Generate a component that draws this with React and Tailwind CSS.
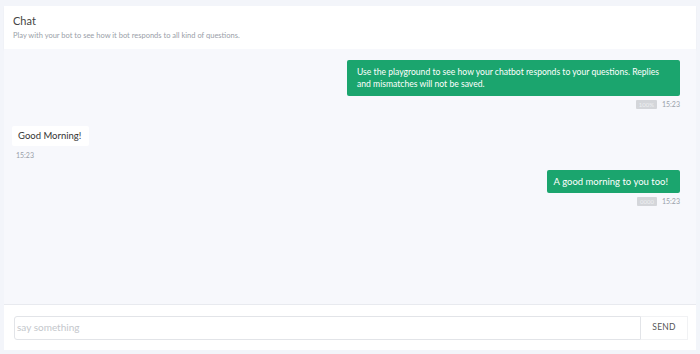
const messages = [
  {
    id: 1,
    from: 'user',
    text: 'Use the playground to see how your chatbot responds to your questions. Replies and mismatches will not be saved.',
    badge: '100%',
    time: '15:23',
    size: 'text-[8.6px] pl-[10px] pr-[12px] py-[6px]',
  },
  { id: 2, from: 'bot', text: 'Good Morning!', time: '15:23' },
  {
    id: 3,
    from: 'user',
    text: 'A good morning to you too!',
    badge: '0000',
    time: '15:23',
    size: 'text-[9.5px] pl-[7px] pr-[12px] py-[5.5px]',
  },
];

const UserMessage = ({ msg }) => (
  <div className="flex flex-col items-end">
    <div className={`max-w-[333px] bg-[#1ba56e] text-white leading-[12px] rounded-[2px] ${msg.size}`}>
      {msg.text}
    </div>
    <div className="flex items-center gap-[5px] mt-[3px] text-[7px] text-[#9aa0a8]">
      <span className="bg-[#d4d6da] text-[#eef0f2] text-[6px] px-[3px] leading-[9px] rounded-[1px]">{msg.badge}</span>
      <span>{msg.time}</span>
    </div>
  </div>
);

const BotMessage = ({ msg }) => (
  <div className="flex flex-col items-start">
    <div className="bg-white text-[#333] text-[9.5px] leading-[12px] pl-[6px] pr-[8px] py-[4px] rounded-[2px]">
      {msg.text}
    </div>
    <div className="mt-[4px] ml-[4px] text-[7px] text-[#9aa0a8]">{msg.time}</div>
  </div>
);

export default function App() {
  return (
    <div className="w-[700px] h-[354px] bg-[#f3f5fa] font-['Lato',sans-serif] flex flex-col px-[4px] pt-[6px] pb-[4px] overflow-hidden">
      {/* Header */}
      <div className="bg-white h-[43px] px-[9px] pt-[8px] shadow-[0_1px_2px_rgba(0,0,0,0.04)]">
        <div className="text-[11px] text-[#444] leading-[14px]">Chat</div>
        <div className="text-[7.5px] text-[#9aa0a8] mt-[2px]">Play with your bot to see how it bot responds to all kind of questions.</div>
      </div>

      {/* Messages */}
      <div className="flex-1 bg-[#f7f8fc] pr-[16px] pl-[8px] pt-[11px] flex flex-col">
        <UserMessage msg={messages[0]} />
        <div className="mt-[16px]">
          <BotMessage msg={messages[1]} />
        </div>
        <div className="mt-[10px]">
          <UserMessage msg={messages[2]} />
        </div>
      </div>

      {/* Input */}
      <div className="bg-white h-[46px] border-t border-[#e8eaef] flex items-center pl-[10px] pr-[8px]">
        <div className="flex flex-1 h-[24px]">
          <input
            autoFocus
            className="flex-1 outline-none text-[10px] pl-[2px] text-[#555] placeholder:text-[#c4c7cc] bg-transparent border border-[#e2e4e8] rounded-l-[3px]"
            placeholder="say something"
          />
          <button className="w-[47px] border-y border-r border-[#f1f2f4] text-[8.5px] text-[#555] tracking-wide">SEND</button>
        </div>
      </div>
    </div>
  );
}
